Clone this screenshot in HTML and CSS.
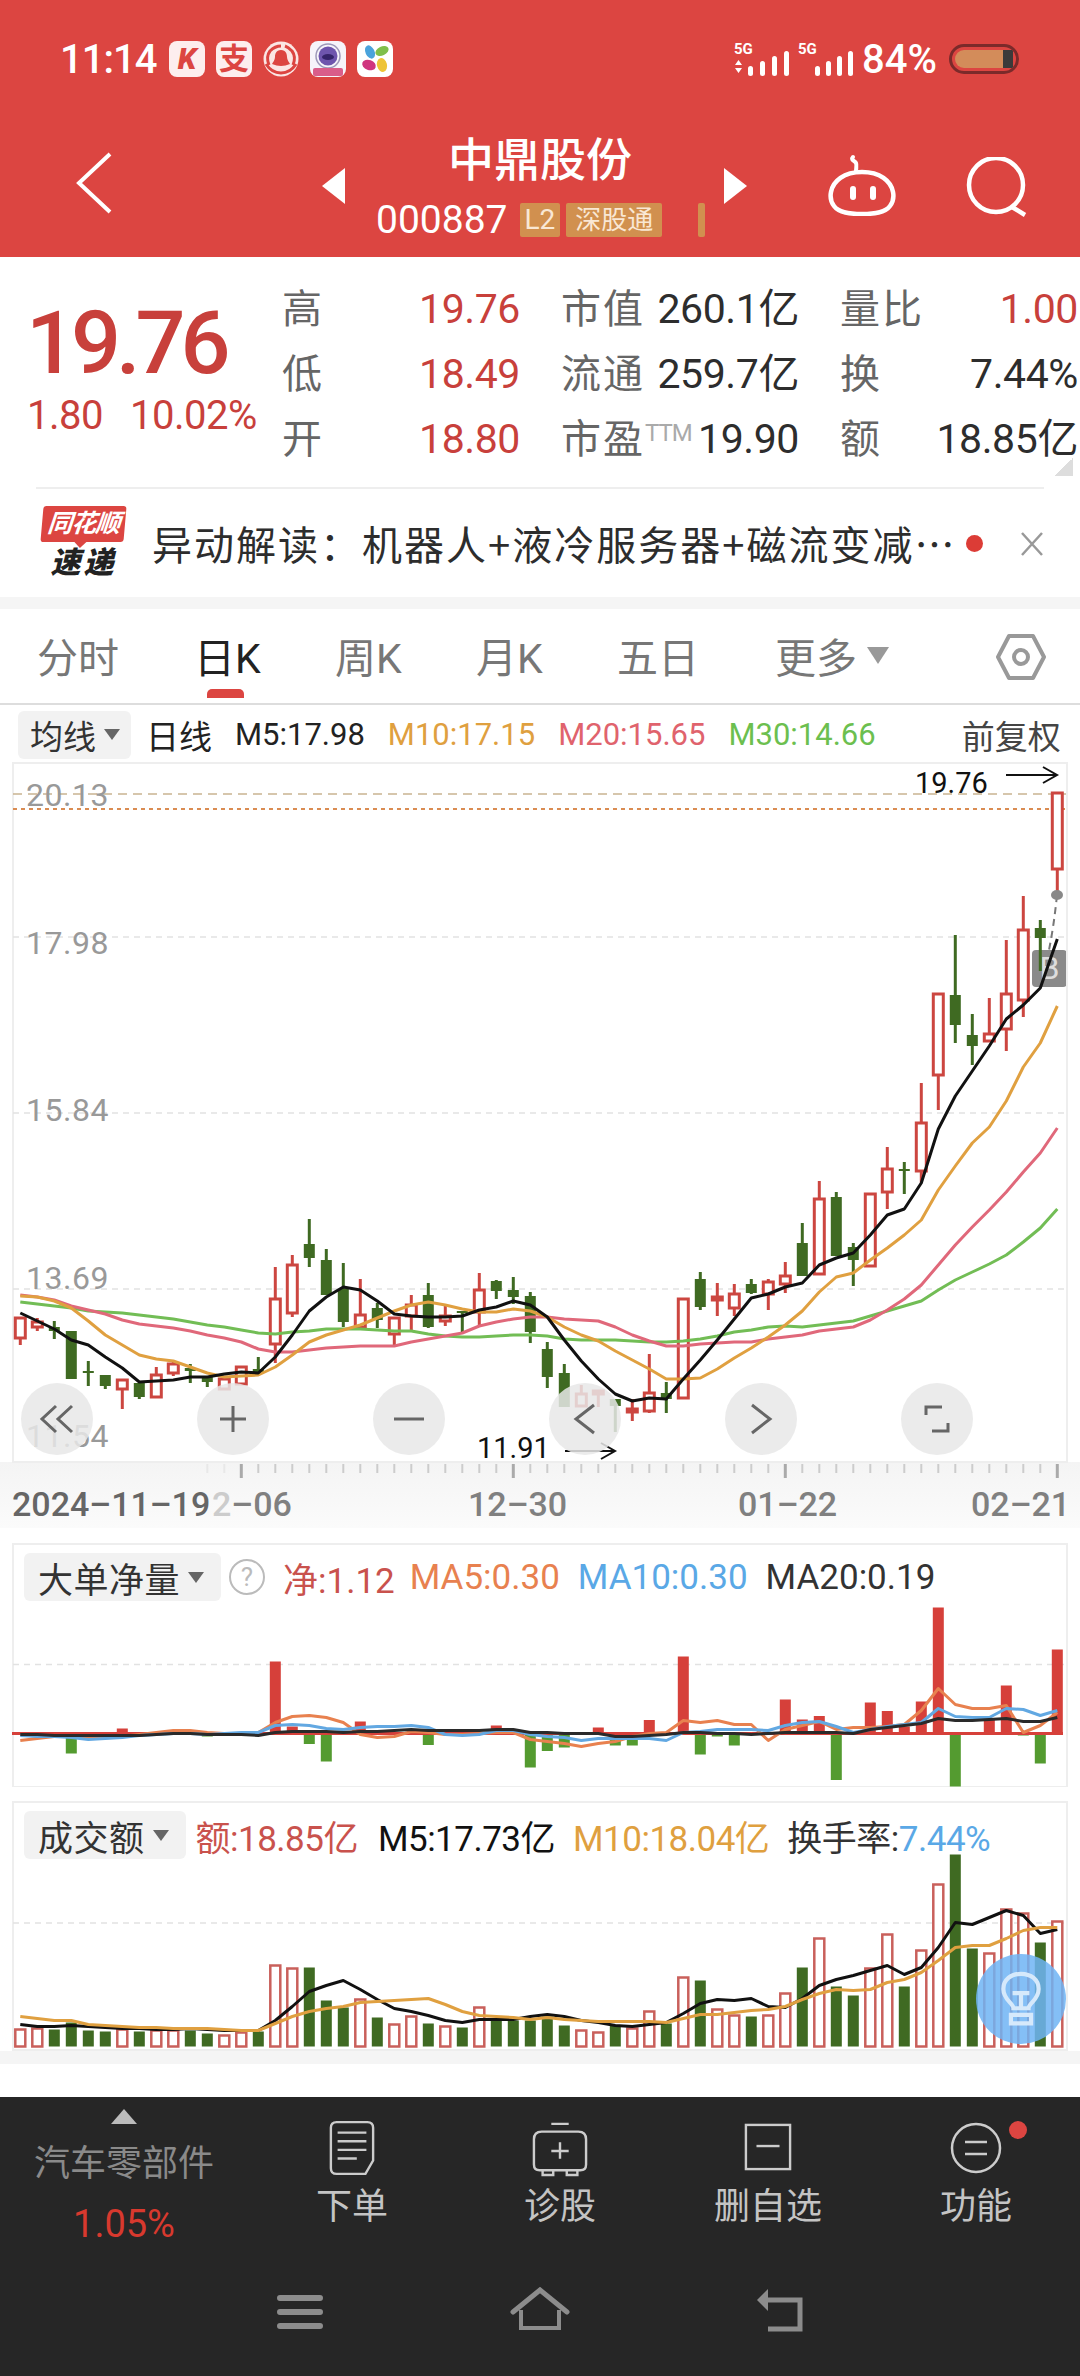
FILE: index.html
```html
<!DOCTYPE html>
<html lang="zh-CN">
<head>
    <meta charset="UTF-8">
    <title>中鼎股份</title>
    <link rel="stylesheet" href="styles.css">
</head>
<body>
    <header class="topbar">
        <div class="statusbar">
            <span class="clock">11:14</span>
            <div class="notify-icons">
                <span class="app-icon app-k">K</span>
                <span class="app-icon app-zhi">支</span>
                <svg class="app-svg" viewBox="0 0 36 36"><circle cx="18" cy="18" r="17.5" fill="#fbe6e4"/><path d="M6 24c-2-5-2-10 1-14 3-3 7-5 11-5" fill="none" stroke="#dc4541" stroke-width="3"/><path d="M30 24c2-5 2-10-1-14-2-2-4-4-7-5" fill="none" stroke="#dc4541" stroke-width="3"/><path d="M3 23c5 8 11 9 15 9s10-1 15-9" fill="none" stroke="#dc4541" stroke-width="3"/><path d="M18 9c-5 0-6 4-6 7 0 3-2 5-3 7 3 1 6 2 9 2s6-1 9-2c-1-2-3-4-3-7 0-3-1-7-6-7z" fill="#dc4541"/></svg>
                <svg class="app-svg" viewBox="0 0 36 36"><rect width="36" height="36" rx="8" fill="#f6f4fa"/><circle cx="18" cy="15" r="12" fill="none" stroke="#9d98b8" stroke-width="1.5"/><circle cx="18" cy="15" r="9.5" fill="#6e55ad"/><ellipse cx="18" cy="16" rx="6" ry="3" fill="#35246a"/><rect x="3" y="27" width="30" height="8" rx="2" fill="#d95d8a"/></svg>
                <svg class="app-svg" viewBox="0 0 36 36"><rect width="36" height="36" rx="8" fill="#fff"/><ellipse cx="13" cy="11" rx="4.5" ry="7" transform="rotate(-25 13 11)" fill="#4aa3dc"/><ellipse cx="25" cy="10" rx="7" ry="4.5" transform="rotate(-25 25 10)" fill="#7fbf4b"/><ellipse cx="12" cy="24" rx="7" ry="5" transform="rotate(20 12 24)" fill="#d0357f"/><ellipse cx="25" cy="24" rx="5" ry="7" transform="rotate(-15 25 24)" fill="#eec436"/></svg>
            </div>
            <div class="status-right">
                <svg class="signal" viewBox="0 0 58 36"><text x="2" y="13" class="signal-text">5G</text><path d="M3 24l3.5-5 3.5 5zM3 27l3.5 5 3.5-5z" fill="#fff"/><rect x="16" y="25" width="5" height="10" rx="2.5" fill="#fff"/><rect x="28" y="20" width="5" height="15" rx="2.5" fill="#fff"/><rect x="40" y="15" width="5" height="20" rx="2.5" fill="#fff"/><rect x="52" y="10" width="5" height="25" rx="2.5" fill="#fff"/></svg>
                <svg class="signal signal-b" viewBox="0 0 58 36"><text x="2" y="13" class="signal-text">5G</text><rect x="19" y="25" width="5" height="10" rx="2.5" fill="#fff"/><rect x="30" y="20" width="5" height="15" rx="2.5" fill="#fff"/><rect x="41" y="15" width="5" height="20" rx="2.5" fill="#fff"/><rect x="52" y="10" width="5" height="25" rx="2.5" fill="#fff"/></svg>
                <span class="battery-pct">84%</span>
                <span class="battery"><i class="battery-fill"></i><i class="battery-rest"></i></span>
            </div>
        </div>
        <nav class="navbar">
            <svg class="back-icon" viewBox="0 0 36 62"><path d="M34 2L3 31l31 29" fill="none" stroke="#fff" stroke-width="4"/></svg>
            <svg class="tri tri-left" viewBox="0 0 23 36"><path d="M23 0v36L0 18z" fill="#fff"/></svg>
            <div class="stock-title">
                <div class="stock-name">中鼎股份</div>
                <div class="stock-code">
                    <span class="code-num">000887</span>
                    <span class="tag tag-l2">L2</span>
                    <span class="tag">深股通</span>
                    <span class="tag-stub"></span>
                </div>
            </div>
            <svg class="tri tri-right" viewBox="0 0 23 36"><path d="M0 0v36l23-18z" fill="#fff"/></svg>
            <svg class="robot-icon" viewBox="0 0 70 62"><path d="M26 3c-3 3 2 4 3 6s0 5 0 9" fill="none" stroke="#fff" stroke-width="4" stroke-linecap="round"/><path d="M35 18c-18 0-29 9-31 20-1 5 0 10 3 14 5 7 16 8 28 8s23-1 28-8c3-4 4-9 3-14-2-11-13-20-31-20z" fill="none" stroke="#fff" stroke-width="4.5"/><rect x="23" y="32" width="6" height="14" rx="3" fill="#fff"/><rect x="43" y="32" width="6" height="14" rx="3" fill="#fff"/></svg>
            <svg class="search-icon" viewBox="0 0 62 60"><circle cx="30" cy="28" r="27" fill="none" stroke="#fff" stroke-width="4.5"/><path d="M46 50l13 8" fill="none" stroke="#fff" stroke-width="4.5"/></svg>
        </nav>
    </header>

    <section class="quote">
        <div class="price-box">
            <div class="price">19.76</div>
            <div class="price-change"><span>1.80</span><span>10.02%</span></div>
        </div>
        <div class="stats">
            <div class="stat"><span class="stat-label">高</span><span class="up">19.76</span></div>
            <div class="stat"><span class="stat-label">市值</span><span>260.1亿</span></div>
            <div class="stat"><span class="stat-label">量比</span><span class="up">1.00</span></div>
            <div class="stat"><span class="stat-label">低</span><span class="up">18.49</span></div>
            <div class="stat"><span class="stat-label">流通</span><span>259.7亿</span></div>
            <div class="stat"><span class="stat-label">换</span><span>7.44%</span></div>
            <div class="stat"><span class="stat-label">开</span><span class="up">18.80</span></div>
            <div class="stat"><span class="stat-label">市盈<sup class="ttm">TTM</sup></span><span>19.90</span></div>
            <div class="stat"><span class="stat-label">额</span><span>18.85亿</span></div>
        </div>
        <span class="corner"></span>
    </section>

    <section class="news">
        <div class="news-logo">
            <span class="logo-top">同花顺</span>
            <span class="logo-bottom">速递</span>
        </div>
        <div class="news-text">异动解读：机器人+液冷服务器+磁流变减…</div>
        <span class="news-dot"></span>
        <svg class="news-close" viewBox="0 0 24 24"><path d="M2 1l20 22M22 1L2 23" fill="none" stroke="#999" stroke-width="2.5"/></svg>
    </section>

    <div class="band"></div>

    <div class="tabs">
        <span class="tab">分时</span>
        <span class="tab tab-active">日K</span>
        <span class="tab">周K</span>
        <span class="tab">月K</span>
        <span class="tab">五日</span>
        <span class="tab tab-more">更多<i class="arrow-down arrow-big"></i></span>
        <svg class="hex-icon" viewBox="0 0 50 46"><path d="M13 2h24l11 21-11 21H13L2 23z" fill="none" stroke="#999" stroke-width="4" stroke-linejoin="round"/><circle cx="25" cy="23" r="7" fill="none" stroke="#999" stroke-width="4"/></svg>
    </div>

    <div class="legend">
        <span class="chip">均线<i class="arrow-down"></i></span>
        <span class="legend-item legend-daily">日线</span>
        <span class="legend-item">M5:17.98</span>
        <span class="legend-item c-orange">M10:17.15</span>
        <span class="legend-item c-pink">M20:15.65</span>
        <span class="legend-item c-green">M30:14.66</span>
        <span class="legend-right">前复权</span>
    </div>

    <div class="chart" id="kline">
        <span class="y-label y1">20.13</span>
        <span class="y-label y2">17.98</span>
        <span class="y-label y3">15.84</span>
        <span class="y-label y4">13.69</span>
        <span class="y-label y5">11.54</span>
        <span class="mark mark-high">19.76</span>
        <span class="mark mark-low">11.91</span>
        <span class="b-tag">B</span>
        <div class="chart-buttons">
            <span class="round-btn"><svg viewBox="0 0 36 36"><path d="M17 5L3 18l14 13M33 5L19 18l14 13" fill="none" stroke="#666" stroke-width="3"/></svg></span>
            <span class="round-btn"><svg viewBox="0 0 36 36"><path d="M18 5v26M5 18h26" fill="none" stroke="#666" stroke-width="3"/></svg></span>
            <span class="round-btn"><svg viewBox="0 0 36 36"><path d="M3 18h30" fill="none" stroke="#666" stroke-width="3"/></svg></span>
            <span class="round-btn"><svg viewBox="0 0 36 36"><path d="M27 4L9 18l18 14" fill="none" stroke="#666" stroke-width="3"/></svg></span>
            <span class="round-btn"><svg viewBox="0 0 36 36"><path d="M9 4l18 14L9 32" fill="none" stroke="#666" stroke-width="3"/></svg></span>
            <span class="round-btn"><svg viewBox="0 0 36 36"><path d="M7 14V6h16M29 22v8H13" fill="none" stroke="#666" stroke-width="3"/></svg></span>
        </div>
    </div>

    <div class="axis">
        <span class="date date-first">2024–11–19</span>
        <span class="date date-a"><i class="date-faded">2</i>–06</span>
        <span class="date date-b">12–30</span>
        <span class="date date-c">01–22</span>
        <span class="date date-d">02–21</span>
    </div>

    <section class="panel panel-flow" id="flow">
        <div class="panel-head">
            <span class="chip chip-lg">大单净量<i class="arrow-down"></i></span>
            <span class="help">?</span>
            <span class="up-soft">净:1.12</span>
            <span class="c-coral">MA5:0.30</span>
            <span class="c-blue">MA10:0.30</span>
            <span class="c-dark">MA20:0.19</span>
        </div>
    </section>

    <section class="panel panel-amount" id="amount">
        <div class="panel-head">
            <span class="chip chip-lg">成交额<i class="arrow-down"></i></span>
            <span class="up-soft">额:18.85亿</span>
            <span class="c-black">M5:17.73亿</span>
            <span class="c-orange">M10:18.04亿</span>
            <span class="c-dark">换手率:<span class="c-blue">7.44%</span></span>
        </div>
        <span class="bulb"><svg viewBox="0 0 50 66"><path d="M16 44c0-6-12-10-12-23C4 10 13 3 25 3s21 7 21 18c0 13-12 17-12 23z" fill="none" stroke="#d6e9fb" stroke-width="5"/><path d="M15 26h20M25 26v18M13 52h24v10H13z" fill="none" stroke="#d6e9fb" stroke-width="5"/></svg></span>
    </section>

    <div class="band band-bottom"></div>
    <div class="spacer"></div>

    <footer class="bottom">
        <div class="bottom-tabs">
            <div class="sector">
                <i class="sector-arrow"></i>
                <span class="sector-name">汽车零部件</span>
                <span class="sector-pct">1.05%</span>
            </div>
            <div class="action">
                <svg class="icon-order" viewBox="0 0 50 58"><path d="M9 2h32q6 0 6 6v34l-8 14H9q-6 0-6-6V8q0-6 6-6z" fill="none" stroke="#ccc" stroke-width="2.5"/><path d="M10 13h30M10 22h30M10 31h30M10 40h20" stroke="#ccc" stroke-width="2.5"/></svg>
                <span>下单</span>
            </div>
            <div class="action">
                <svg class="icon-check" viewBox="0 0 58 58"><path d="M20 3h18M10 11h38q8 0 8 8v26q0 6-6 6H8q-6 0-6-6V19q0-8 8-8zM11 51v5h11v-5M36 51v5h11v-5" fill="none" stroke="#ccc" stroke-width="2.5"/><path d="M29 22v17M20 31h18" stroke="#ccc" stroke-width="2.5"/></svg>
                <span>诊股</span>
            </div>
            <div class="action">
                <svg class="icon-remove" viewBox="0 0 50 50"><rect x="2" y="2" width="46" height="46" fill="none" stroke="#ccc" stroke-width="2.5"/><path d="M13 24h24" stroke="#ccc" stroke-width="2.5"/></svg>
                <span>删自选</span>
            </div>
            <div class="action action-last">
                <svg class="icon-more" viewBox="0 0 52 52"><circle cx="26" cy="26" r="24" fill="none" stroke="#ccc" stroke-width="2.5"/><path d="M15 20h22M15 32h22" stroke="#ccc" stroke-width="2.5"/></svg>
                <span>功能</span>
                <i class="action-dot"></i>
            </div>
        </div>
        <div class="sysnav">
            <svg class="sys-menu" viewBox="0 0 46 36"><path d="M3 4h40M3 18h40M3 32h40" stroke="#8c8c8c" stroke-width="6" stroke-linecap="round"/></svg>
            <svg class="sys-home" viewBox="0 0 60 44"><path d="M3 25L30 3l27 22" fill="none" stroke="#8c8c8c" stroke-width="5" stroke-linecap="round"/><path d="M11 23v18h38V23" fill="none" stroke="#8c8c8c" stroke-width="4"/></svg>
            <svg class="sys-back" viewBox="0 0 48 44"><path d="M10 12h34v29H12" fill="none" stroke="#8c8c8c" stroke-width="5"/><path d="M1 12L12 1v22z" fill="#8c8c8c"/></svg>
        </div>
    </footer>

    <script src="chart.js"></script>
</body>
</html>
```

FILE: styles.css
```css
* {
    box-sizing: border-box;
}

body {
    margin: 0;
    width: 1080px;
    background: #fff;
    font-family: Roboto, "Noto Sans CJK SC", sans-serif;
    color: #222;
}

i {
    font-style: normal;
}

/* top red header */
.topbar {
    height: 257px;
    background: #dc4541;
    color: #fff;
}

.statusbar {
    display: flex;
    align-items: center;
    height: 118px;
    padding: 0 60px;
}

.clock {
    width: 109px;
    font-size: 40px;
    font-weight: 500;
    letter-spacing: -1px;
}

.notify-icons {
    display: flex;
    gap: 11px;
}

.app-icon {
    width: 36px;
    height: 36px;
    border-radius: 8px;
    background: #fdeeee;
    color: #dc4541;
    font-weight: 700;
    font-size: 30px;
    line-height: 36px;
    text-align: center;
}

.app-k {
    font-weight: 900;
    font-style: italic;
}

.app-svg {
    width: 36px;
    height: 36px;
}

.status-right {
    display: flex;
    align-items: center;
    margin-left: auto;
    margin-right: 1px;
}

.signal {
    width: 58px;
    height: 36px;
}

.signal-b {
    margin-left: 6px;
}

.signal-text {
    font-size: 15px;
    font-weight: 700;
    fill: #fff;
}

.battery-pct {
    margin-left: 8px;
    font-size: 40px;
    font-weight: 500;
}

.battery {
    display: flex;
    width: 70px;
    height: 30px;
    margin-left: 12px;
    padding: 3px;
    border-radius: 15px;
    border: 3px solid #7b2a2a;
    overflow: hidden;
}

.battery-fill {
    flex: 1;
    background: #d38c5a;
    border-radius: 9px 0 0 9px;
}

.battery-rest {
    width: 10px;
    background: #3a3a3a;
}

.navbar {
    position: relative;
    display: flex;
    align-items: flex-start;
    height: 139px;
}

.back-icon {
    width: 36px;
    height: 62px;
    margin: 34px 0 0 76px;
}

.tri {
    width: 23px;
    height: 36px;
    margin-top: 50px;
}

.tri-left {
    margin-left: 210px;
}

.tri-right {
    margin-left: -11px;
}

.robot-icon {
    width: 70px;
    height: 62px;
    margin: 36px 0 0 80px;
}

.search-icon {
    width: 62px;
    height: 60px;
    margin: 39px 0 0 69px;
}

.stock-title {
    width: 390px;
    margin-top: 16px;
    padding-left: 32px;
}

.stock-name {
    padding-left: 71px;
    font-size: 46px;
    line-height: 52px;
    font-weight: 500;
}

.stock-code {
    display: flex;
    align-items: center;
    margin-top: 16px;
    height: 36px;
}

.code-num {
    font-size: 39px;
    letter-spacing: 0;
    margin-right: 12px;
    margin-left: -1px;
}

.tag {
    height: 34px;
    padding: 0 9px;
    margin-right: 6px;
    background: #d1904f;
    border-radius: 2px;
    font-size: 26px;
    line-height: 34px;
    color: #f9e7d4;
}

.tag-l2 {
    padding: 0 5px;
    font-size: 28px;
}

.tag-stub {
    width: 7px;
    height: 34px;
    margin-left: 30px;
    background: #d1904f;
    border-radius: 2px;
}

/* quote block */
.quote {
    position: relative;
    display: flex;
    height: 232px;
    margin-right: 2px;
    padding-top: 18px;
}

.quote::after {
    content: "";
    position: absolute;
    left: 36px;
    right: 34px;
    bottom: 0;
    height: 2px;
    background: #eee;
}

.price-box {
    width: 282px;
    padding-left: 28px;
    color: #c8403b;
}

.price {
    margin-top: 22px;
    margin-left: -2px;
    font-size: 88px;
    line-height: 92px;
    font-weight: 500;
    letter-spacing: -5px;
}

.price-change {
    display: flex;
    gap: 27px;
    margin-top: 4px;
    margin-left: -1px;
    font-size: 40px;
    line-height: 46px;
    letter-spacing: -0.5px;
}

.stats {
    display: grid;
    grid-template-columns: 238px 238px 238px;
    grid-auto-rows: 65px;
    column-gap: 41px;
    margin-top: 2px;
    font-size: 41px;
    line-height: 65px;
    letter-spacing: -0.4px;
    color: #2d2d2d;
}

.stat {
    display: flex;
    justify-content: space-between;
    white-space: nowrap;
}

.stat-label {
    color: #666;
    font-size: 40px;
    letter-spacing: 2px;
}

.up {
    color: #c8403b;
}

.ttm {
    font-size: 24px;
    color: #aaa;
    letter-spacing: -1px;
    vertical-align: 12px;
    line-height: 0;
}

.corner {
    position: absolute;
    right: 5px;
    top: 201px;
    width: 18px;
    height: 18px;
    background: linear-gradient(135deg, transparent 50%, #ddd 50%);
}

/* news line */
.news {
    position: relative;
    display: flex;
    align-items: center;
    height: 108px;
    padding-left: 42px;
}

.news-logo {
    position: relative;
    display: flex;
    flex-direction: column;
    align-items: center;
    width: 83px;
}

.logo-top {
    position: relative;
    width: 83px;
    height: 36px;
    background: #dc4541;
    color: #fff;
    border-radius: 3px;
    transform: skewX(-5deg);
    font-size: 25px;
    line-height: 36px;
    font-weight: 700;
    font-style: italic;
    letter-spacing: -1px;
    text-align: center;
}

.logo-top::after {
    content: "";
    position: absolute;
    left: 34px;
    top: 36px;
    border-left: 6px solid transparent;
    border-right: 6px solid transparent;
    border-top: 6px solid #dc4541;
}

.logo-bottom {
    margin-top: 4px;
    font-size: 30px;
    line-height: 34px;
    font-weight: 900;
    font-style: italic;
    letter-spacing: 3px;
    color: #222;
}

.news-text {
    margin-left: 27px;
    width: 806px;
    font-family: "Noto Sans CJK SC", sans-serif;
    font-size: 40px;
    letter-spacing: 2px;
    white-space: nowrap;
    color: #2d2d2d;
}

.news-dot {
    position: absolute;
    left: 966px;
    top: 46px;
    width: 17px;
    height: 17px;
    border-radius: 50%;
    background: #dc3c36;
}

.news-close {
    position: absolute;
    left: 1020px;
    top: 43px;
    width: 24px;
    height: 24px;
}

.band {
    height: 12px;
    background: #f5f5f5;
}

/* period tabs */
.tabs {
    position: relative;
    height: 96px;
    display: flex;
    align-items: center;
    padding-left: 37px;
    padding-bottom: 2px;
    border-bottom: 2px solid #ddd;
    font-size: 41px;
    color: #777;
}

.tab {
    width: 141px;
    white-space: nowrap;
}

.tab-active {
    position: relative;
    color: #222;
    margin-left: 16px;
}

.tab-active::after {
    content: "";
    position: absolute;
    left: 13px;
    top: 64px;
    width: 37px;
    height: 9px;
    border-radius: 5px 5px 0 0;
    background: #dc4541;
}

.tab-more {
    margin-left: 17px;
    display: flex;
    align-items: center;
}

.hex-icon {
    position: absolute;
    left: 996px;
    top: 25px;
    width: 50px;
    height: 46px;
}

.arrow-down {
    display: inline-block;
    width: 0;
    height: 0;
    margin-left: 8px;
    border-left: 8px solid transparent;
    border-right: 8px solid transparent;
    border-top: 11px solid #666;
}

.arrow-big {
    margin-left: 10px;
    border-left-width: 11px;
    border-right-width: 11px;
    border-top: 17px solid #999;
}

/* legend row */
.legend {
    display: flex;
    align-items: center;
    height: 57px;
    padding: 2px 0 0 18px;
    font-size: 31px;
    white-space: nowrap;
    color: #222;
}

.chip {
    display: inline-flex;
    align-items: center;
    height: 48px;
    padding: 0 11px 0 12px;
    background: #f2f2f2;
    border-radius: 6px;
    font-size: 33px;
    color: #333;
}

.legend-daily {
    margin-left: 15px;
    font-size: 33px;
}

.legend-item {
    margin-right: 23px;
}

.legend-right {
    margin-left: 63px;
    color: #444;
    font-size: 33px;
}

.c-orange {
    color: #dfa03f;
}

.c-pink {
    color: #e0636d;
}

.c-green {
    color: #6cbf4f;
}

.c-coral {
    color: #e8814f;
}

.c-blue {
    color: #5aa8e6;
}

.c-dark {
    color: #333;
}

.c-black {
    color: #111;
}

/* kline chart */
.chart {
    position: relative;
    z-index: 1;
    height: 702px;
}

.chart svg.plot {
    position: absolute;
    left: 0;
    top: 0;
}

.y-label {
    position: absolute;
    left: 26px;
    font-size: 32px;
    line-height: 36px;
    letter-spacing: 0.5px;
    color: #999;
}

.y1 { top: 15px; }
.y2 { top: 163px; }
.y3 { top: 330px; }
.y4 { top: 498px; }
.y5 { top: 656px; }

.mark {
    position: absolute;
    font-size: 29px;
    line-height: 32px;
    color: #111;
}

.mark-high {
    left: 915px;
    top: 5px;
}

.mark-low {
    left: 477px;
    top: 670px;
}

.b-tag {
    position: absolute;
    z-index: -1;
    left: 1032px;
    top: 188px;
    width: 35px;
    height: 37px;
    background: #8a8a8a;
    border-radius: 4px;
    color: #ddd;
    font-size: 32px;
    line-height: 37px;
    text-align: center;
}

.chart-buttons {
    position: absolute;
    left: 21px;
    top: 621px;
    display: flex;
    gap: 104px;
}

.round-btn {
    display: flex;
    align-items: center;
    justify-content: center;
    width: 72px;
    height: 72px;
    border-radius: 50%;
    background: rgba(232, 232, 232, 0.85);
}

.round-btn svg {
    width: 36px;
    height: 36px;
}

/* date axis */
.axis {
    position: relative;
    height: 66px;
    margin-top: -2px;
    background: linear-gradient(#f4f4f4, #fbfbfb);
}

.date {
    position: absolute;
    top: 22px;
    font-size: 34px;
    font-weight: 500;
    line-height: 40px;
    color: #808080;
    white-space: nowrap;
}

.date-first {
    left: 12px;
    color: #666;
}

.date-a {
    left: 212px;
}

.date-faded {
    color: #ccc;
}

.date-b {
    left: 468px;
}

.date-c {
    left: 738px;
}

.date-d {
    left: 971px;
}

/* sub panels */
.panel {
    position: relative;
    padding: 10px 0 0 24px;
}

.panel svg.plot {
    position: absolute;
    left: 0;
    top: 0;
}

.panel-flow {
    height: 244px;
    margin-top: 15px;
}

.panel-amount {
    height: 250px;
    margin-top: 14px;
}

.panel-head {
    position: relative;
    display: flex;
    align-items: center;
    height: 48px;
    font-size: 35px;
    white-space: nowrap;
}

.panel-amount .panel-head {
    letter-spacing: -0.5px;
}

.chip-lg {
    padding: 0 17px 0 14px;
    font-size: 35px;
    letter-spacing: 0.5px;
    color: #333;
}

.up-soft {
    color: #c9524d;
    margin-left: 10px;
    margin-right: 20px;
}

.panel-flow .up-soft {
    margin-right: 15px;
}

.panel-head > .c-coral,
.panel-head > .c-blue,
.panel-head > .c-black,
.panel-head > .c-orange {
    margin-right: 18px;
}

.help {
    width: 36px;
    height: 36px;
    margin-left: 8px;
    margin-right: 8px;
    border: 2px solid #bbb;
    border-radius: 50%;
    font-size: 26px;
    line-height: 32px;
    text-align: center;
    color: #bbb;
}

.bulb {
    position: absolute;
    left: 976px;
    top: 153px;
    display: flex;
    align-items: center;
    justify-content: center;
    width: 90px;
    height: 90px;
    border-radius: 50%;
    background: rgba(110, 180, 245, 0.85);
}

.bulb svg {
    width: 42px;
    height: 56px;
}

.band-bottom {
    height: 13px;
}

.spacer {
    height: 33px;
}

/* dark footer */
.bottom {
    height: 279px;
    background: #262626;
}

.bottom-tabs {
    display: flex;
    height: 168px;
    padding-top: 12px;
}

.sector {
    position: relative;
    display: flex;
    flex-direction: column;
    align-items: center;
    width: 248px;
}

.sector-arrow {
    width: 0;
    height: 0;
    border-left: 13px solid transparent;
    border-right: 13px solid transparent;
    border-bottom: 15px solid #bbb;
}

.sector-name {
    margin-top: 18px;
    font-size: 36px;
    line-height: 44px;
    color: #8a8a8a;
}

.sector-pct {
    margin-top: 16px;
    font-size: 38px;
    line-height: 44px;
    color: #d8392e;
}

.action {
    position: relative;
    display: flex;
    flex-direction: column;
    align-items: center;
    width: 208px;
    height: 156px;
    color: #c4c4c4;
    font-size: 36px;
}

.action svg {
    display: block;
}

.icon-order {
    width: 48px;
    height: 56px;
    margin-top: 11px;
}

.icon-check {
    width: 56px;
    height: 56px;
    margin-top: 12px;
}

.icon-remove {
    width: 48px;
    height: 48px;
    margin: 14px 0 6px;
}

.icon-more {
    width: 52px;
    height: 52px;
    margin: 13px 0 3px;
}

.action span {
    margin-top: 5px;
    line-height: 50px;
}

.icon-order + span {
    margin-top: 6px;
}

.action-dot {
    position: absolute;
    left: 137px;
    top: 12px;
    width: 18px;
    height: 18px;
    border-radius: 50%;
    background: #dc4541;
}

.sysnav {
    position: relative;
    height: 111px;
}

.sysnav svg {
    position: absolute;
}

.sys-menu {
    left: 277px;
    top: 29px;
    width: 46px;
    height: 36px;
}

.sys-home {
    left: 510px;
    top: 22px;
    width: 60px;
    height: 44px;
}

.sys-back {
    left: 756px;
    top: 23px;
    width: 48px;
    height: 44px;
}

/* svg chart parts, drawn by chart.js */
.frame {
    fill: none;
    stroke: #eee;
    stroke-width: 2;
}

.grid {
    stroke: #e2e2e2;
    stroke-width: 1.5;
    stroke-dasharray: 6 5;
}

.grid-top {
    stroke: #c9b491;
    stroke-width: 1.5;
    stroke-dasharray: 9 6;
}

.grid-prev {
    stroke: #da8c52;
    stroke-width: 2;
    stroke-dasharray: 4 4;
}

.wick-up { stroke: #cc4640; stroke-width: 3; }
.wick-down { stroke: #3f6a22; stroke-width: 3; }
.body-up { fill: #fff; stroke: #cc4640; stroke-width: 3; }
.body-down { fill: #3f6a22; }
.vol-up { fill: #fff; stroke: #c9605b; stroke-width: 2.5; }
.flow-up { fill: #d6403a; }
.flow-down { fill: #549b30; }
.baseline { stroke: #d6403a; stroke-width: 3; }

.line { fill: none; stroke-width: 3; stroke-linejoin: round; }
.line-black { stroke: #111; }
.line-orange { stroke: #e0a040; }
.line-pink { stroke: #e0687a; }
.line-green { stroke: #72bd55; }
.line-coral { stroke: #e8814f; }
.line-blue { stroke: #62a8e2; }
.line-dark { stroke: #2a2a2a; }

.tick { stroke: #ccc; stroke-width: 2; }
.tick-faint { stroke: #e8e8e8; stroke-width: 2; }
.tick-major { stroke: #aaa; stroke-width: 3; }
.arrow { fill: none; stroke: #111; stroke-width: 2; }
.peak-link { fill: none; stroke: #777; stroke-width: 2; stroke-dasharray: 7 5; }
.peak-dot { fill: #888; }
```

FILE: chart.js
```js
// x position of a candle
function px(i) {
    return 20.3 + 17 * i;
}

function makeSvg(host, top, height) {
    const svg = document.createElementNS('http://www.w3.org/2000/svg', 'svg');
    svg.setAttribute('class', 'plot');
    svg.setAttribute('width', 1080);
    svg.setAttribute('height', height);
    svg.setAttribute('viewBox', `0 ${top} 1080 ${height}`);
    host.insertBefore(svg, host.firstChild);
    return svg;
}

function add(svg, tag, cls, attrs) {
    const el = document.createElementNS('http://www.w3.org/2000/svg', tag);
    el.setAttribute('class', cls);
    Object.keys(attrs).forEach(k => el.setAttribute(k, attrs[k]));
    svg.appendChild(el);
    return el;
}

function hline(svg, cls, y) {
    add(svg, 'line', cls, { x1: 13, x2: 1066, y1: y, y2: y });
}

function polyline(svg, cls, ys) {
    const pts = ys.map((y, i) => `${px(i)},${y}`).join(' ');
    add(svg, 'polyline', 'line ' + cls, { points: pts });
}

// candles: type (1 up, 0 down), high, body top, body bottom, low
const candles = [
    [1,1318,1318,1338,1345],[1,1318,1322,1327,1331],[0,1321,1327,1331,1339],[0,1331,1331,1379,1379],
    [0,1361,1371,1373,1386],[0,1375,1375,1386,1389],[1,1380,1380,1389,1409],[0,1383,1383,1397,1399],
    [1,1367,1375,1397,1397],[1,1362,1364,1373,1376],[0,1364,1368,1371,1383],[0,1376,1376,1382,1387],
    [1,1379,1379,1389,1389],[1,1367,1367,1384,1384],[0,1357,1369,1374,1374],[1,1267,1299,1344,1363],
    [1,1255,1265,1313,1317],[0,1219,1244,1258,1267],[0,1249,1260,1295,1295],[0,1263,1289,1322,1327],
    [1,1279,1315,1327,1327],[0,1303,1308,1320,1328],[1,1318,1318,1334,1346],[1,1295,1305,1316,1330],
    [0,1283,1295,1327,1328],[1,1306,1316,1321,1326],[0,1311,1311,1313,1332],[1,1273,1290,1312,1325],
    [0,1280,1281,1291,1299],[0,1277,1290,1297,1304],[0,1292,1296,1332,1343],[0,1342,1349,1377,1388],
    [0,1364,1373,1407,1407],[1,1385,1394,1406,1406],[1,1391,1391,1394,1407],[0,1399,1399,1406,1432],
    [1,1399,1409,1412,1421],[1,1354,1393,1411,1413],[0,1382,1393,1399,1413],[1,1299,1299,1398,1398],
    [0,1272,1279,1307,1310],[1,1283,1297,1300,1316],[1,1284,1294,1308,1316],[0,1279,1284,1293,1294],
    [1,1279,1282,1294,1310],[1,1262,1276,1284,1293],[0,1223,1243,1276,1276],[1,1181,1199,1274,1274],
    [0,1192,1197,1256,1256],[0,1243,1247,1260,1286],[1,1194,1194,1266,1266],[1,1147,1169,1192,1209],
    [0,1162,1169,1170,1194],[1,1083,1123,1171,1183],[1,994,994,1075,1110],[0,935,995,1025,1043],
    [0,1014,1035,1046,1065],[1,998,1034,1041,1042],[1,940,994,1029,1051],[1,896,930,1000,1017],
    [0,920,928,938,971],[1,793,793,869,895]
];

const m5 = [1313,1321,1329,1340,1345,1357,1368,1382,1381,1380,1377,1377,1374,1372,1373,1357,1335,1311,1297,1287,1290,1301,1314,1316,1317,1317,1316,1310,1307,1301,1305,1317,1340,1361,1379,1394,1401,1398,1399,1379,1360,1340,1319,1298,1294,1287,1283,1265,1258,1253,1235,1215,1209,1183,1129,1096,1071,1046,1019,1005,988,939];
const m10 = [1296,1297,1301,1308,1321,1335,1345,1355,1359,1361,1367,1373,1377,1376,1375,1367,1355,1342,1335,1330,1325,1318,1311,1305,1302,1305,1309,1312,1312,1309,1311,1317,1327,1335,1341,1351,1360,1369,1379,1379,1378,1369,1358,1348,1337,1325,1311,1292,1277,1273,1260,1248,1235,1220,1190,1166,1143,1127,1101,1067,1043,1006];
const m20 = [1295,1297,1300,1306,1310,1314,1320,1324,1326,1328,1331,1335,1338,1342,1349,1352,1352,1350,1348,1347,1346,1346,1346,1342,1339,1336,1333,1326,1322,1319,1317,1317,1319,1320,1321,1327,1335,1341,1346,1346,1344,1343,1342,1342,1339,1337,1335,1331,1329,1327,1320,1310,1299,1285,1265,1245,1227,1210,1192,1172,1153,1128];
const m30 = [1302,1304,1306,1308,1311,1312,1313,1315,1317,1319,1322,1325,1327,1330,1333,1334,1332,1331,1329,1329,1329,1330,1331,1331,1334,1336,1337,1337,1336,1335,1335,1336,1339,1340,1340,1340,1341,1342,1342,1341,1339,1336,1332,1330,1327,1326,1327,1325,1323,1321,1316,1311,1306,1301,1290,1280,1272,1264,1255,1242,1228,1209];

function drawKline() {
    const svg = makeSvg(document.getElementById('kline'), 762, 720);
    add(svg, 'rect', 'frame', { x: 13, y: 763, width: 1054, height: 699 });
    hline(svg, 'grid-top', 794);
    hline(svg, 'grid-prev', 809);
    hline(svg, 'grid', 937);
    hline(svg, 'grid', 1113);
    hline(svg, 'grid', 1289);

    candles.forEach((c, i) => {
        const x = px(i);
        const up = c[0] === 1;
        add(svg, 'line', up ? 'wick-up' : 'wick-down', { x1: x, x2: x, y1: c[1], y2: c[4] });
        if (up) {
            add(svg, 'rect', 'body-up', { x: x - 5, y: c[2], width: 10, height: c[3] - c[2] });
        } else {
            add(svg, 'rect', 'body-down', { x: x - 5.5, y: c[2], width: 11, height: Math.max(c[3] - c[2], 2) });
        }
    });

    polyline(svg, 'line-green', m30);
    polyline(svg, 'line-pink', m20);
    polyline(svg, 'line-orange', m10);
    polyline(svg, 'line-black', m5);

    // high / low arrows and the marker on the last candle
    add(svg, 'path', 'arrow', { d: 'M1006 775h51M1043 767l14 8-14 8' });
    add(svg, 'path', 'arrow', { d: 'M565 1451h50M601 1443l14 8-14 8' });
    add(svg, 'path', 'peak-link', { d: 'M1057 895q-3 30-8 55' });
    add(svg, 'ellipse', 'peak-dot', { cx: 1057, cy: 895, rx: 6, ry: 5 });

    // ticks fade out towards the first date label
    for (let i = 11; i < 62; i++) {
        const major = i === 13 || i === 29 || i === 45 || i === 61;
        const cls = major ? 'tick-major' : (i < 13 ? 'tick-faint' : 'tick');
        add(svg, 'line', cls, { x1: px(i), x2: px(i), y1: 1464, y2: major ? 1478 : 1473 });
    }
}

// net flow bars, signed height above the zero line
const flow = [0,0,0,-20,0,0,5,0,0,0,0,-3,0,0,0,72,7,-10.5,-28,0,12,0,0,0,-11.5,0,0,0,8,0,-34,-17.5,-14,0,6,-12,-12,13.5,0,77,-21,-3,-12,0,-1,34,14,17.5,-46.5,0,31,22.5,7,32,126,-53,0,14,48,-2,-30,84];
const flowMa5 = [-7,-5,-3,-3,-3,-3,-3,-1,1,3,3,1,0,0,1,11,17,18,16,11,-1,-4,-3,2,1,-1,-1,0,1,1,-6,-8,-10,-13,-10,-8,-3,0,1,13,11,13,9,9,-7,4,8,12,4,6,6,7,9,23,45,29,25,25,28,1,8,21];
const flowMa10 = [-2,-3,-3,-4,-6,-5,-4,-2,-1,0,0,-1,0,1,1,8,9,8,5,4,6,7,7,8,6,-1,-2,-1,3,3,-1,-3,-4,-7,-5,-5,-5,-5,-7,1,2,4,4,4,3,8,11,12,7,1,4,7,9,11,25,17,16,16,25,24,18,23];
const flowMa20 = [-1,-1,-2,-2,-2,-2,-2,-2,-1,0,0,-1,-1,-1,-2,1,2,2,2,1,2,2,3,4,3,3,3,3,4,4,1,1,0,0,0,-3,-3,-2,-1,1,1,0,0,-1,0,1,1,1,1,0,4,6,8,10,15,13,13,14,15,12,12,16];

function drawFlow() {
    const base = 1733.5;
    const svg = makeSvg(document.getElementById('flow'), 1543, 244);
    add(svg, 'rect', 'frame', { x: 13, y: 1544, width: 1054, height: 243 });
    hline(svg, 'grid', 1664.5);
    flow.forEach((v, i) => {
        if (!v) return;
        const h = Math.abs(v);
        add(svg, 'rect', v > 0 ? 'flow-up' : 'flow-down', {
            x: px(i) - 5.5, y: v > 0 ? base - h : base, width: 11, height: h
        });
    });
    add(svg, 'line', 'baseline', { x1: 12, x2: 1063, y1: base, y2: base });
    polyline(svg, 'line-coral', flowMa5.map(v => base - v));
    polyline(svg, 'line-blue', flowMa10.map(v => base - v));
    polyline(svg, 'line-dark', flowMa20.map(v => base - v));
}

// turnover bars, height above the bottom line
const amount = [17,18,17,24,16,15,17,15,16,16,16,13,11,14,15,81,78,79,46,39,47,29,22,30,23,20,19,39,28,26,26,30,21,16,14,21,18,35,23,69,66,37,31,30,31,53,79,108,60,51,78,112,60,96,162,192,98,93,137,133,104,125];
const amountMa5 = [22,20,20,21,20,19,18,18,17,17,18,17,16,16,16,26,40,55,61,66,57,47,38,35,31,26,24,27,27,27,30,32,30,26,24,21,20,22,24,33,43,47,46,48,40,39,48,61,67,71,76,81,72,79,99,124,122,129,136,131,113,117];
const amountMa10 = [30,28,26,26,22,21,20,19,19,18,18,18,17,16,16,23,30,35,38,40,44,45,46,47,48,42,35,31,30,29,27,29,27,26,25,25,25,25,24,28,32,32,34,36,37,40,47,53,57,56,57,64,67,74,86,99,101,101,108,116,119,119];

function drawAmount() {
    const base = 2046.5;
    const svg = makeSvg(document.getElementById('amount'), 1801, 250);
    add(svg, 'rect', 'frame', { x: 13, y: 1802, width: 1054, height: 248 });
    hline(svg, 'grid', 1923);
    amount.forEach((v, i) => {
        const up = candles[i][0] === 1;
        if (up) {
            add(svg, 'rect', 'vol-up', { x: px(i) - 5, y: base - v, width: 10, height: v });
        } else {
            add(svg, 'rect', 'body-down', { x: px(i) - 5.5, y: base - v, width: 11, height: v });
        }
    });
    polyline(svg, 'line-black', amountMa5.map(v => base - v));
    polyline(svg, 'line-orange', amountMa10.map(v => base - v));
}

drawKline();
drawFlow();
drawAmount();
```
